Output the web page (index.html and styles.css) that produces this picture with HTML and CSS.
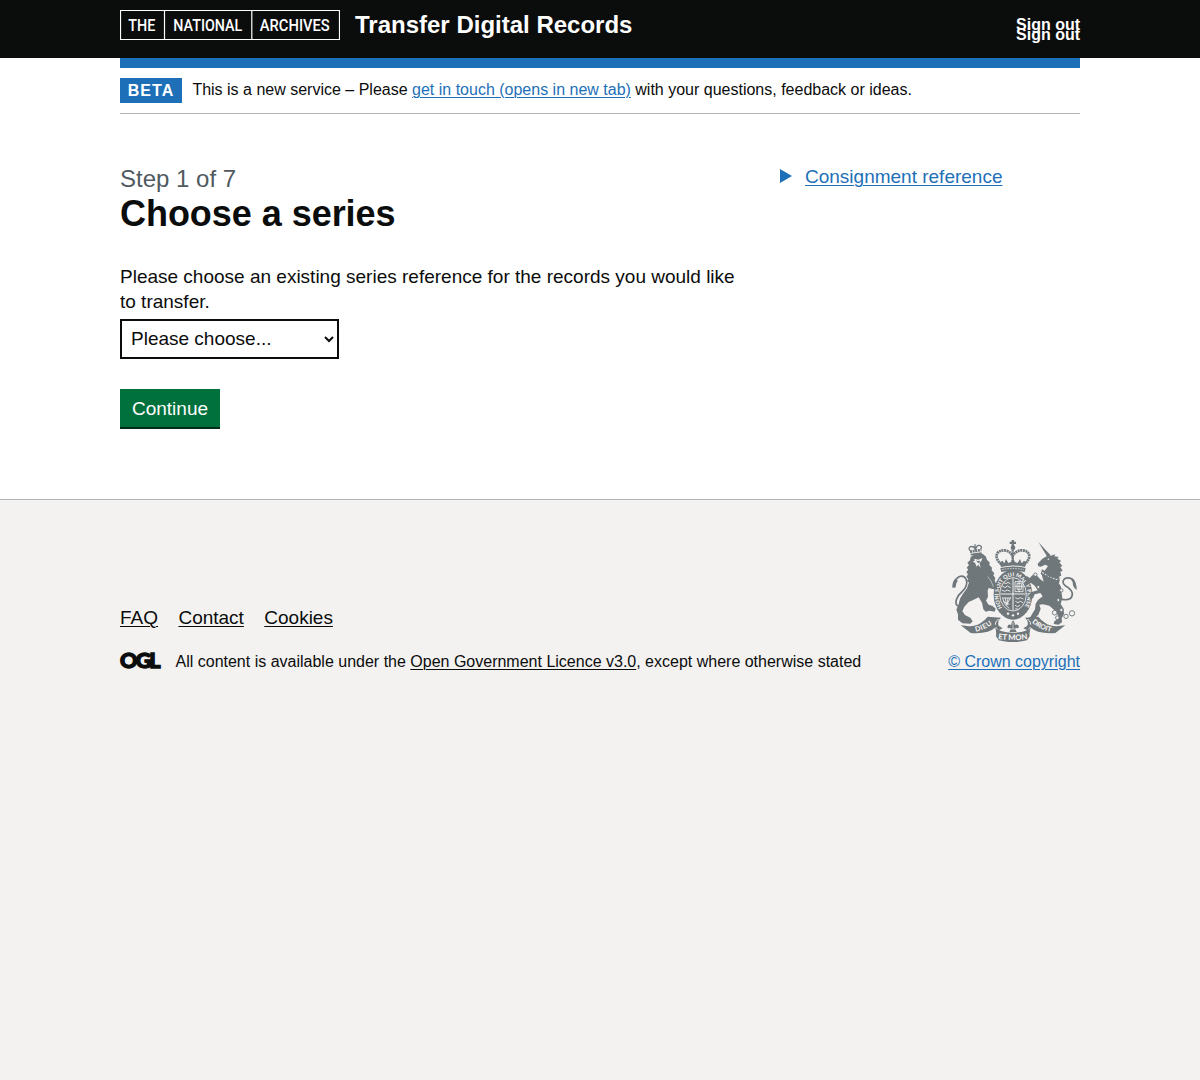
FILE: index.html
```html
<!DOCTYPE html>
<html lang="en">
<head>
<meta charset="utf-8">
<title>Choose a series</title>
<link rel="stylesheet" href="styles.css">
</head>
<body>
<header class="header">
  <div class="container header-row">
    <a class="brand" href="#">
      <svg class="brand-logo" width="220" height="30" viewBox="0 0 220 30" role="img" aria-label="The National Archives">
        <path d="M.5.5h219v29H.5zM44.5 0v30M131.8 0v30" fill="none" stroke="#fff" stroke-width="1.2"/>
        <g fill="#fff" font-family="Roboto, sans-serif" font-weight="500" font-size="15.8">
          <text x="8.3" y="21" textLength="27" lengthAdjust="spacingAndGlyphs">THE</text>
          <text x="53.3" y="21" textLength="69" lengthAdjust="spacingAndGlyphs">NATIONAL</text>
          <text x="139.8" y="21" textLength="70" lengthAdjust="spacingAndGlyphs">ARCHIVES</text>
        </g>
      </svg>
      <span class="service-name">Transfer Digital Records</span>
    </a>
    <nav class="account"><a href="#">Sign out</a><a href="#">Sign out</a></nav>
  </div>
</header>
<div class="container page">
  <div class="phase">
    <strong class="tag">BETA</strong>
    <span class="phase-text">This is a new service – Please <a href="#">get in touch (opens in new tab)</a> with your questions, feedback or ideas.</span>
  </div>
  <main class="main">
    <form class="form">
      <span class="caption">Step 1 of 7</span>
      <h1 class="heading">Choose a series</h1>
      <label class="label" for="series">Please choose an existing series reference for the records you would like to transfer.</label>
      <select class="select" id="series"><option>Please choose...</option></select>
      <button class="button" type="button">Continue</button>
    </form>
    <aside class="aside">
      <svg width="12" height="14" viewBox="0 0 12 14"><path d="M0 0v14l12-7z" fill="#1d70b8"/></svg>
      <a href="#">Consignment reference</a>
    </aside>
  </main>
</div>
<footer class="footer">
  <div class="container footer-row">
    <div class="footer-meta">
      <nav class="footer-links"><a href="#">FAQ</a><a href="#">Contact</a><a href="#">Cookies</a></nav>
      <div class="licence">
        <svg class="ogl" width="41" height="17" viewBox="0 0 41 17"><text x="0.1" y="16" font-family="Lato, sans-serif" font-weight="900" font-size="21.5" textLength="40.5" lengthAdjust="spacing" fill="#0b0c0c" stroke="#0b0c0c" stroke-width="1.4">OGL</text></svg>
        <span class="licence-text">All content is available under the <a href="#">Open Government Licence v3.0</a>, except where otherwise stated</span>
      </div>
    </div>
    <a class="copyright" href="#">
      <svg class="crest" width="125" height="102" viewBox="36 30 375 306" fill="#6f777b">
        <defs>
          <path id="motto-left" d="M107 305Q136 300 161 279"/>
          <path id="motto-mid" d="M174 327Q219 334 264 327"/>
          <path id="motto-right" d="M275 277Q302 301 336 306"/>
          <path id="garter" d="M187 233A43.5 56 0 1 1 251 233"/>
        </defs>
        <!-- crown -->
        <path d="M215 29h7v6h6v7h-6v6h-7v-6h-6v-7h6z"/>
        <circle cx="219" cy="53" r="7"/>
        <g fill="none" stroke="#6f777b">
          <path d="M184 103C160 83 168 60 194 61Q210 63 218 78Q227 63 243 61C270 60 277 83 253 103" stroke-width="8" stroke-dasharray="6 1.6"/>
          <path d="M218 59v40" stroke-width="7" stroke-dasharray="6 1.5"/>
        </g>
        <path d="M179 98l8-6 6 8 5-13 7 12 8-3 6-12 6 12 8 3 7-12 5 13 7-8 7 6-4 13q-36-9-72 0z"/>
        <path d="M181 114q37-9 76 0l-3 12q-35-8-70 0z"/>
        <path d="M186 119q33-7 66 0" stroke="#f3f2f1" stroke-width="2" fill="none" stroke-dasharray="5 3"/>
        <!-- garter and shield -->
        <ellipse cx="219" cy="194" rx="58" ry="75"/>
        <ellipse cx="219" cy="193" rx="40" ry="50" stroke="#f3f2f1" stroke-width="2.5"/>
        <text font-family="Lato, sans-serif" font-size="16.5" font-weight="900" fill="#f3f2f1"><textPath href="#garter" textLength="232" lengthAdjust="spacing">HONI SOIT QUI MAL Y PENSE</textPath></text>
        <g fill="none" stroke="#f3f2f1" stroke-width="2.6">
          <path d="M219 145v96M181 192h76" stroke-width="3"/>
          <path d="M190 157l8 4 6-4 8 5M187 168l8 5 7-5 10 5M185 180l9 4 8-4 9 4"/>
          <path d="M225 155h24v30h-24zM231 160h13v18h-13zM237 152v34M225 169h26"/>
          <path d="M188 204q6 23 20 31M212 203q-10 17-13 24M196 204l3 20M204 204l-3 22M186 204h27M190 215l18 8"/>
          <path d="M226 203l8 4 7-4 9 4M226 214l8 4 7-4 8 4M225 226l8 4 7-4M226 236l10 2"/>
        </g>
        <g fill="#f3f2f1"><circle cx="204" cy="251" r="3.5"/><circle cx="219" cy="256" r="3.5"/><circle cx="234" cy="251" r="3.5"/></g>
        <!-- lion -->
        <g fill="none" stroke="#6f777b">
          <path d="M90 65l34-5" stroke-width="8" stroke-dasharray="6 2"/>
          <path d="M90 62q-6-9 2-12 10-3 15 9 2-14 11-13 10 3 4 12M105 43v18" stroke-width="4"/>
          <path d="M92 74l33-5" stroke-width="5"/>
          <path d="M68 230Q43 232 49 209Q54 195 68 183Q84 167 79 149Q72 134 57 140Q45 147 44 162" stroke-width="5"/>
          <path d="M50 149q-9 8-8 24" stroke-width="10"/>
        </g>
        <path d="M92 81l12-8 24-2 10 9 3 10 8 7-1 8 8 8-1 8 8 9-3 6 6 9-2 6 8 19-4 9-22-5-3 8 1 18-6 12 8 12 12 4 9 8-3 9-15-3-12 3-7-7-4-20-10-16-15 7-15 7-13 14-6 14 8 11 16 8 7 11-7 7-24-1-13-11v-16l-5-14 7-17 4-16 9-15 12-16 6-18-7-3 5-7-6-7 5-7-5-7 6-7-5-6 7-8-5-7 8-7z"/>
        <path d="M103 86l12 3 12-5-3 10-6 4 4 15-8-9-4 6-5-12-7-3 6-3z" fill="#f3f2f1"/>
        <path d="M108 91l5 2 8-1-5 8-4-3z"/>
        <path d="M143 140q12 12 17 30" stroke="#f3f2f1" stroke-width="1.6" fill="none"/>
        <!-- unicorn -->
        <path d="M295 36l36 39-9 6z"/>
        <path d="M320 79l4-10 7 8 15-4-3 6 13 2-4 5 12 7-6 4 9 11-6 3 7 11-7 3 3 12-6 2 1 9-16-6-30-18 11-16-9-4-12 6-8-1-2-8 14-15z"/>
        <circle cx="325" cy="88" r="2.3" fill="#f3f2f1"/>
        <path d="M306 118l54 31-4 12-54-29z"/>
        <path d="M307 127q24 20 49 22" fill="none" stroke="#f3f2f1" stroke-width="3.5" stroke-dasharray="5 4"/>
        <path d="M304 130l48 22 11 18 1 14 3 21-5 17 9 14 1 16-7 13 1 12-11 7-14-2 2-8 10-7 2-10-10-15-17-15-19-4-11 1 4 13-7 17-18 18-11 3-7-6 12-8 14-23 2-17 7-11 14-11-7-10-17 4-5 12-8 3-5-13 9-9 18-5-9-14-12-9-12 8-10-6 9-8-8-8 9-6 9 6 10-10 11 2 10 11 11 8z"/>
        <path d="M366 208Q398 214 397 190Q393 177 378 169Q363 158 373 147Q383 140 396 147Q406 155 405 169" fill="none" stroke="#6f777b" stroke-width="5"/>
        <path d="M391 144q20 8 19 36-12-8-12-23z"/>
        <g fill="#f3f2f1" stroke="#6f777b" stroke-width="2.8">
          <circle cx="286" cy="134" r="5"/><circle cx="295" cy="171" r="4.5"/><circle cx="364" cy="181" r="5"/><circle cx="355" cy="210" r="4.5"/><circle cx="344" cy="248" r="7"/><circle cx="352" cy="263" r="5.5"/><circle cx="364" cy="240" r="5"/><circle cx="378" cy="259" r="6.5"/><circle cx="396" cy="250" r="8"/>
        </g>
        <!-- ribbon -->
        <path d="M62 286Q104 293 121 280 136 270 143 260L183 263q-12 10-7 24l12 8-12 6-8-10Q145 313 92 309z"/>
        <path d="M376 286Q334 293 317 280 302 270 295 260L255 263q12 10 7 24l-12 8 12 6 8-10Q293 313 346 309z"/>
        <path d="M166 284q1-14 10-15 8 4 4 15M272 284q-1-14-10-15-8 4-4 15" stroke="#f3f2f1" stroke-width="3" fill="none"/>
        <path d="M165 291q10 16 54 17 44-1 54-17-6 13-4 28l-8 12q-42 11-85 0l-8-12q2-15-3-28z"/>
        <path d="M202 291q2-10 12-6-1-7 5-14 7 7 6 14 10-4 12 6-3 6-9 2l-2 5 4 8h-22l4-8-2-5q-6 4-8-2z"/>
        <path d="M219 277v20M209 297h20" stroke="#f3f2f1" stroke-width="2"/>
        <g font-family="Lato, sans-serif" font-weight="900" font-size="21" fill="#f3f2f1">
          <text><textPath href="#motto-left" textLength="55">DIEU</textPath></text>
          <text font-size="23"><textPath href="#motto-mid" textLength="89">ET MON</textPath></text>
          <text><textPath href="#motto-right" textLength="65">DROIT</textPath></text>
        </g>
      </svg>
      <span>© Crown copyright</span>
    </a>
  </div>
</footer>
</body>
</html>
```
FILE: styles.css
```css
* { box-sizing: border-box; }
body {
  margin: 0;
  min-height: 1080px;
  display: flex;
  flex-direction: column;
  background: #fff;
  color: #0b0c0c;
  font: 19px/25px "Liberation Sans", Arial, sans-serif;
}
a { color: #1d70b8; text-decoration: underline; text-decoration-thickness: 1px; text-underline-offset: 2px; }
.container { width: 960px; margin: 0 auto; }
.header { height: 58px; background: #0b0c0c; }
.header-row { display: flex; justify-content: space-between; }
.brand { display: flex; gap: 15px; padding-top: 10px; color: #fff; text-decoration: none; }
.service-name { font-size: 24px; font-weight: 700; line-height: 30px; }
.account { display: flex; flex-direction: column; padding-top: 19px; }
.account a { height: 10px; font-size: 16px; font-weight: 700; line-height: 12px; color: #fff; text-decoration: none; }
.page { border-top: 10px solid #1d70b8; }
.phase { height: 46px; display: flex; align-items: flex-start; padding-top: 10px; border-bottom: 1px solid #b1b4b6; font-size: 16px; }
.tag { width: 62px; height: 25px; margin-right: 10.4px; background: #1d70b8; color: #fff; text-align: center; letter-spacing: 1px; line-height: 25px; }
.phase-text { line-height: 24px; }
.main { display: grid; grid-template-columns: 630px 1fr; gap: 30px; padding-top: 50px; height: 385px; }
.form { display: flex; flex-direction: column; align-items: flex-start; }
.caption { font-size: 24px; line-height: 30px; color: #505a5f; }
.heading { margin: 0 0 30px; font-size: 36px; line-height: 40px; letter-spacing: -0.04px; }
.label { margin-bottom: 5px; }
.select { width: 219px; height: 40px; padding: 4px 5px 6px; border: 2px solid #0b0c0c; border-radius: 0; background: #fff; color: #0b0c0c; font: inherit; }
.button { width: 100px; height: 40px; margin-top: 30px; padding: 0; border: 0; border-bottom: 2px solid #002d18; background: #00703c; color: #fff; font: inherit; }
.aside { display: flex; gap: 13px; align-items: flex-start; }
.aside svg { margin-top: 5px; }
.footer { flex: 1; padding-top: 40px; border-top: 1px solid #b1b4b6; background: #f3f2f1; }
.footer-row { display: flex; justify-content: space-between; align-items: flex-start; }
.footer-meta { padding-top: 65px; }
.footer-links { display: flex; gap: 20.4px; margin-bottom: 20px; }
.footer-links a, .licence a { color: #0b0c0c; }
.licence { display: flex; gap: 14.5px; font-size: 16px; line-height: 24px; }
.ogl { margin-top: 2px; overflow: visible; }
.copyright { display: flex; flex-direction: column; align-items: center; font-size: 16px; line-height: 20px; }
.crest { margin-bottom: 10px; }
```
